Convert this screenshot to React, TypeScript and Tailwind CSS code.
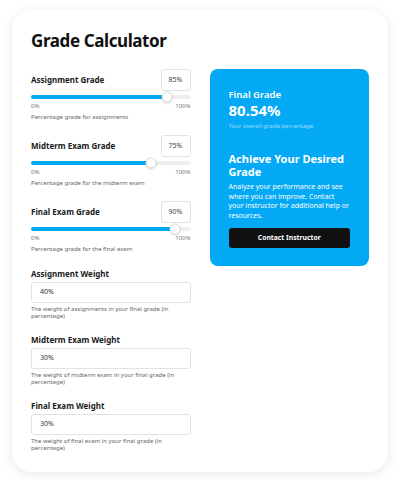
import { useState } from 'react';

const font = { fontFamily: '"Noto Sans", "Open Sans", sans-serif' };

type Grade = { label: string; value: number; help: string };
type Weight = { label: string; value: string; help: string };

const grades: Grade[] = [
  { label: 'Assignment Grade', value: 85, help: 'Percentage grade for assignments' },
  { label: 'Midterm Exam Grade', value: 75, help: 'Percentage grade for the midterm exam' },
  { label: 'Final Exam Grade', value: 90, help: 'Percentage grade for the final exam' },
];

const weights: Weight[] = [
  { label: 'Assignment Weight', value: '40%', help: 'The weight of assignments in your final grade (in percentage)' },
  { label: 'Midterm Exam Weight', value: '30%', help: 'The weight of midterm exam in your final grade (in percentage)' },
  { label: 'Final Exam Weight', value: '30%', help: 'The weight of final exam in your final grade (in percentage)' },
];

function GradeSlider({ grade }: { grade: Grade }) {
  return (
    <div className="flex flex-col">
      <div className="flex items-center justify-between">
        <span className="text-[8px] font-bold leading-[10px] text-[#1a1a1a]">{grade.label}</span>
        <div className="flex h-[22px] w-[30px] items-center justify-center rounded-[3px] border border-[#e2e2e2] text-[7px] text-[#444]">
          {grade.value}%
        </div>
      </div>
      <div className="relative mt-[4px] h-[4px] rounded-full bg-[#eeeeee]">
        <div className="h-full rounded-full bg-[#03a9f4]" style={{ width: `${grade.value}%` }} />
        <div
          className="absolute top-1/2 h-[11px] w-[11px] -translate-x-1/2 -translate-y-1/2 rounded-full border border-[#dcdcdc] bg-white shadow-sm"
          style={{ left: `${grade.value}%` }}
        />
      </div>
      <div className="mt-[3px] flex justify-between text-[6px] leading-[8px] text-[#777]">
        <span>0%</span>
        <span>100%</span>
      </div>
      <p className="mt-[3px] text-[6px] leading-[8px] text-[#666]">{grade.help}</p>
    </div>
  );
}

function WeightInput({ weight }: { weight: Weight }) {
  return (
    <div className="flex flex-col">
      <span className="text-[8px] font-bold leading-[10px] text-[#1a1a1a]">{weight.label}</span>
      <div className="mt-[3px] flex h-[21px] items-center rounded-[3px] border border-[#e2e2e2] px-[8px] text-[7px] text-[#333]">
        {weight.value}
      </div>
      <p className="mt-[3px] text-[6px] leading-[7px] text-[#666]">{weight.help}</p>
    </div>
  );
}

export default function App() {
  const [final] = useState('80.54%');
  return (
    <div className="min-h-[480px] bg-white px-3 pt-[10px]" style={font}>
      <div className="w-[376px] rounded-[20px] bg-white px-[19px] pb-[20px] pt-[18px] shadow-[0_2px_12px_rgba(0,0,0,0.09)]">
        <h1 className="text-[17px] font-bold leading-[26px] tracking-[-0.4px] text-[#111]">Grade Calculator</h1>
        <div className="mt-[15px] grid grid-cols-2 items-start gap-[19px]">
          <div className="flex flex-col">
            <div className="flex flex-col gap-[14px]">
              {grades.map((g) => (
                <GradeSlider key={g.label} grade={g} />
              ))}
            </div>
            <div className="mt-[16px] flex flex-col gap-[15px]">
              {weights.map((w) => (
                <WeightInput key={w.label} weight={w} />
              ))}
            </div>
          </div>
          <div className="rounded-[8px] bg-[#03a9f4] px-[19px] pb-[18px] pt-[20px] text-white">
            <div className="text-[9.5px] font-semibold leading-[12px]">Final Grade</div>
            <div className="text-[15px] font-bold leading-[18px]">{final}</div>
            <div className="mt-[3px] text-[6px] leading-[8px] text-white/60">Your overall grade percentage</div>
            <h2 className="mt-[22px] text-[11px] font-bold leading-[13px]">Achieve Your Desired Grade</h2>
            <p className="mt-[4px] text-[7px] leading-[9.5px]">
              Analyze your performance and see where you can improve. Contact your instructor for additional help or resources.
            </p>
            <button className="mt-[8px] h-[20px] w-full rounded-[3px] bg-[#111111] text-[6.8px] font-bold text-white">
              Contact Instructor
            </button>
          </div>
        </div>
      </div>
    </div>
  );
}
